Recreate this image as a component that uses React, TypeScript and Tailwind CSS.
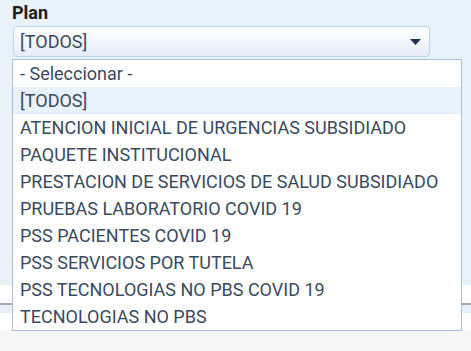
import React from "react";

const items = [
  "- Seleccionar -",
  "[TODOS]",
  "ATENCION INICIAL DE URGENCIAS SUBSIDIADO",
  "PAQUETE INSTITUCIONAL",
  "PRESTACION DE SERVICIOS DE SALUD SUBSIDIADO",
  "PRUEBAS LABORATORIO COVID 19",
  "PSS PACIENTES COVID 19",
  "PSS SERVICIOS POR TUTELA",
  "PSS TECNOLOGIAS NO PBS COVID 19",
  "TECNOLOGIAS NO PBS",
];

export default function App() {
  return (
    <div className="relative w-[471px] h-[351px] overflow-hidden flex flex-col font-['Roboto',_'Liberation_Sans',_sans-serif]">
      <div className="h-[285px] bg-[#e9f1f9] px-[12px] pt-[2px] flex flex-col">
        <div className="text-[18px] leading-[22px] font-bold text-[#1e1e1e]">Plan</div>
        <div className="mt-[2px] ml-[1px] w-[417px] h-[31px] rounded-[4px] border border-[#bcd4f0] bg-gradient-to-b from-white to-[#e7eef7] flex items-center justify-between pl-[6px] pr-[8px]">
          <span className="text-[18px] text-[#3a4a5e]">[TODOS]</span>
          <svg width="11" height="6" viewBox="0 0 11 6">
            <path d="M0 0 L11 0 L5.5 6 Z" fill="#1d3150" />
          </svg>
        </div>
      </div>
      <div className="h-[18px] bg-white" />
      <div className="h-[2px] bg-[#a9a9a9]" />
      <div className="h-[8px] bg-[#e6eef7]" />
      <div className="h-[17px] bg-white" />
      <div className="flex-1 bg-[#f7f7f7]" />

      <div className="absolute left-[12px] top-[59px] w-[450px] border border-[#aac1de] bg-white flex flex-col">
        {items.map((it, i) => (
          <div
            key={i}
            className={`h-[27px] flex items-center pl-[7px] text-[18px] text-[#3a4a5e] whitespace-nowrap ${i === 1 ? "bg-[#e9f1fa]" : ""}`}
          >
            {it}
          </div>
        ))}
      </div>
    </div>
  );
}
